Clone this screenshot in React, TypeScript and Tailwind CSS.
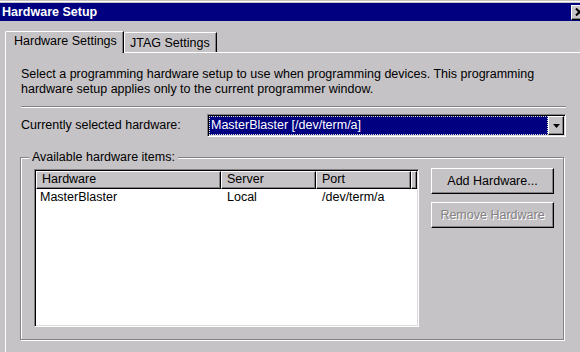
const raised =
  "border border-t-white border-l-white border-b-black border-r-black bg-[#c6c3c6] shadow-[inset_-1px_-1px_0_#848284]";
const sunken =
  "border border-t-[#848284] border-l-[#848284] border-b-white border-r-white shadow-[inset_1px_1px_0_#000,inset_-1px_-1px_0_#dedbde] p-px";

function CloseGlyph() {
  return (
    <svg width="9" height="8" viewBox="0 0 9 8" className="block">
      <path d="M1 0.5 L8 7.5 M8 0.5 L1 7.5" stroke="black" strokeWidth="2" />
    </svg>
  );
}

function DownArrow() {
  return (
    <svg width="7" height="4" viewBox="0 0 7 4" className="block">
      <polygon points="0,0 7,0 3.5,4" fill="black" />
    </svg>
  );
}

const rows = [{ hardware: "MasterBlaster", server: "Local", port: "/dev/term/a" }];

export default function App() {
  return (
    <div className="h-[352px] w-[580px] overflow-hidden bg-[#c6c3c6] font-['Liberation_Sans',Arial,sans-serif] text-[12.5px] leading-[15px] text-black">
      <div className="mt-px h-[2px] border-t border-white" />
      <div className="flex h-[18px] items-center justify-between bg-[#000080] pl-[2px]">
        <span className="font-bold text-white">Hardware Setup</span>
        <div className={`-mr-[7px] flex h-[15px] w-[16px] items-center justify-center ${raised}`}>
          <CloseGlyph />
        </div>
      </div>

      <div className="pl-[5px] pt-[10px]">
        {/* tabs */}
        <div className="flex h-[21px] items-end">
          <div className="relative z-10 -mb-px h-[22px] w-[119px] rounded-tl-[2px] border-l border-r border-t border-l-white border-r-black border-t-white bg-[#c6c3c6] pl-[8px] pt-[2px] shadow-[inset_-1px_0_0_#848284]">
            Hardware Settings
          </div>
          <div className="h-[20px] w-[93px] rounded-tl-[2px] border-l border-r border-t border-l-white border-r-black border-t-white pl-[5px] pt-[3px] shadow-[inset_-1px_0_0_#848284]">
            JTAG Settings
          </div>
        </div>

        {/* panel */}
        <div className="h-[300px] border-l border-t border-white pl-[15px] pt-[14px]">
          <div className="w-[545px]">
            <p className="whitespace-nowrap">
              Select a programming hardware setup to use when programming devices. This programming
              <br />
              hardware setup applies only to the current programmer window.
            </p>
            <div className="mt-[9px] h-[2px] border-b border-t border-b-white border-t-[#848284]" />

            <div className="mt-[6px] flex h-[23px] items-center">
              <span className="w-[186px]">Currently selected hardware:</span>
              <div className={`flex h-[23px] w-[359px] ${sunken}`}>
                <div className="flex flex-1 items-center border border-dotted border-[#d8d8d8] bg-[#000080] pl-px text-white">
                  MasterBlaster [/dev/term/a]
                </div>
                <div className={`flex w-[16px] items-center justify-center ${raised}`}>
                  <DownArrow />
                </div>
              </div>
            </div>

            {/* group box */}
            <div className="relative -ml-px mt-[20px] flex w-[544px] gap-[12px] border border-[#848284] pb-[12px] pl-[13px] pr-[9px] pt-[11px] shadow-[1px_1px_0_#fff,inset_1px_1px_0_#fff]">
              <span className="absolute left-[8px] top-[-8px] bg-[#c6c3c6] px-[3px]">
                Available hardware items:
              </span>

              <div className={`h-[158px] w-[385px] bg-white ${sunken}`}>
                <div className="flex h-[18px]">
                  <div className={`w-[185px] pl-[5px] ${raised}`}>Hardware</div>
                  <div className={`w-[95px] pl-[5px] ${raised}`}>Server</div>
                  <div className={`w-[95px] pl-[5px] ${raised}`}>Port</div>
                  <div className={`flex-1 ${raised}`} />
                </div>
                {rows.map((r) => (
                  <div key={r.hardware} className="flex h-[16px] leading-[16px]">
                    <div className="w-[185px] pl-[4px]">{r.hardware}</div>
                    <div className="w-[95px] pl-[6px]">{r.server}</div>
                    <div className="w-[95px] pl-[6px]">{r.port}</div>
                  </div>
                ))}
              </div>

              <div className="-mt-px flex flex-col gap-[8px]">
                <button
                  type="button"
                  className={`flex h-[26px] w-[123px] items-center justify-center ${raised}`}
                >
                  Add Hardware...
                </button>
                <button
                  type="button"
                  disabled
                  className={`flex h-[26px] w-[123px] items-center justify-center text-[#848284] [text-shadow:1px_1px_0_#fff] ${raised}`}
                >
                  Remove Hardware
                </button>
              </div>
            </div>
          </div>
        </div>
      </div>
    </div>
  );
}
